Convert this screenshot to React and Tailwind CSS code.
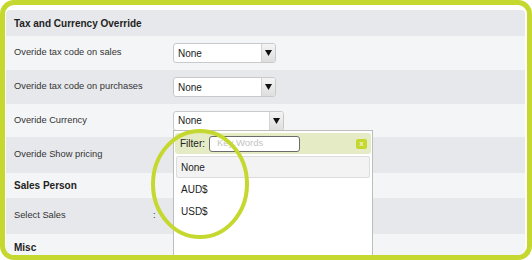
import React from "react";

function Select({ w = "w-[103px]" }) {
  return (
    <div className={`flex h-[20px] ${w} rounded-[3px] border border-[#c9c9c9] bg-white overflow-hidden`}>
      <div className="flex-1 flex items-center pl-[4px] text-[10px] text-[#222]">None</div>
      <div className="w-[14px] flex items-center justify-center bg-gradient-to-b from-[#f4f4f4] to-[#dedede] border-l border-[#d4d4d4]">
        <svg width="7" height="6" viewBox="0 0 7 6"><path d="M0 0h7L3.5 6z" fill="#111" /></svg>
      </div>
    </div>
  );
}

function Row({ bg, h, children }) {
  return <div className={`flex items-center pl-[8px] ${bg} ${h}`}>{children}</div>;
}

export default function App() {
  const light = "bg-[#f4f5f7]";
  const dark = "bg-[#e7e8eb]";
  return (
    <div
      className="relative w-[532px] h-[260px] border-[5px] border-[#c5d82f] rounded-[14px] bg-white overflow-hidden pt-[5px] pl-[1px] pr-[2px]"
      style={{ fontFamily: '"Liberation Sans", Arial, sans-serif' }}
    >
      <div className="flex flex-col rounded-t-[4px] overflow-hidden">
        <Row bg={dark} h="h-[26px]">
          <span className="text-[10px] font-bold text-[#222]">Tax and Currency Override</span>
        </Row>
        <Row bg={light} h="h-[34px]">
          <span className="w-[159px] text-[9.3px] text-[#333]">Overide tax code on sales</span>
          <Select />
        </Row>
        <Row bg={dark} h="h-[34px]">
          <span className="w-[159px] text-[9.3px] text-[#333]">Overide tax code on purchases</span>
          <Select />
        </Row>
        <Row bg={light} h="h-[33px]">
          <span className="w-[159px] text-[9.3px] text-[#333]">Overide Currency</span>
          <Select w="w-[111px]" />
        </Row>
        <Row bg={dark} h="h-[36px]">
          <span className="w-[159px] text-[9.3px] text-[#333]">Overide Show pricing</span>
        </Row>
        <Row bg={light} h="h-[25px]">
          <span className="text-[10px] font-bold text-[#222]">Sales Person</span>
        </Row>
        <Row bg={dark} h="h-[36px]">
          <span className="w-[139px] text-[9.3px] text-[#333]">Select Sales</span>
          <span className="text-[9.3px] text-[#333]">:</span>
        </Row>
        <Row bg={light} h="h-[26px]">
          <span className="text-[10px] font-bold text-[#222]">Misc</span>
        </Row>
      </div>

      {/* dropdown */}
      <div className="absolute left-[168px] top-[125px] w-[200px] h-[140px] bg-white border border-[#bdbdbd] px-[1px] pt-[2px]">
        <div className="flex items-center h-[21px] rounded-[3px] bg-[#e5ebc4] pl-[5px] pr-[4px]">
          <span className="text-[10px] text-[#222]">Filter:</span>
          <div className="ml-[4px] w-[91px] h-[16px] rounded-[3px] border border-[#6b6b6b] bg-white flex items-center pl-[7px] text-[9.5px] text-[#c4c4c4]">
            Key Words
          </div>
          <div className="ml-auto w-[11px] h-[10px] rounded-[2px] bg-[#c5d82f] flex items-center justify-center text-white text-[8px] leading-none">
            x
          </div>
        </div>
        <div className="mt-[2px] mx-[1px] h-[22px] rounded-[2px] border border-[#dcdcdc] bg-[#f3f3f3] flex items-center pl-[4px] text-[10px] text-[#222]">
          None
        </div>
        <div className="h-[22px] flex items-center pl-[6px] text-[10px] text-[#222]">AUD$</div>
        <div className="h-[22px] flex items-center pl-[6px] text-[10px] text-[#222]">USD$</div>
      </div>

      {/* highlight circle */}
      <svg className="absolute left-[-5px] top-[-5px] pointer-events-none" width="532" height="260">
        <ellipse cx="200" cy="184" rx="47" ry="53" fill="none" stroke="#c5d82f" strokeWidth="4" />
      </svg>
    </div>
  );
}
